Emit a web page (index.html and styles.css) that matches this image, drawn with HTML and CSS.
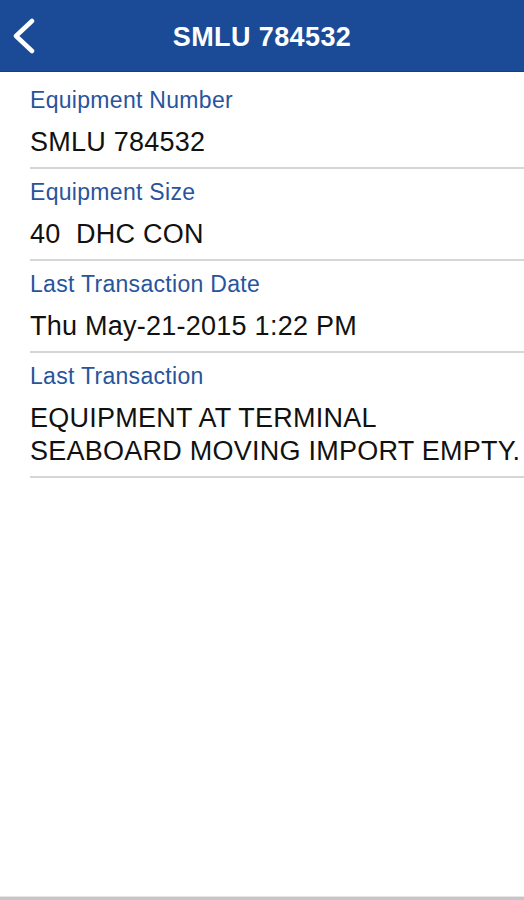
FILE: index.html
```html
<!DOCTYPE HTML>
<html>
<head>
<meta charset="utf-8">
<meta name="viewport" content="width=device-width,initial-scale=1.0">
<title>SMLU 784532</title>
<link rel="stylesheet" href="styles.css">
</head>
<body>
<div class="screen">
    <div class="navBar">
        <a class="btnBack" href="#">
            <svg width="24" height="36" viewBox="0 0 24 36"><polyline points="20,3 4,18 20,33" fill="none" stroke="#fff" stroke-width="4.5" stroke-linecap="round" stroke-linejoin="round"/></svg>
        </a>
        <div class="navTitle">SMLU 784532</div>
    </div>
    <div class="detailList">
        <div class="detailRow">
            <div class="lbl">Equipment Number</div>
            <div class="val">SMLU 784532</div>
        </div>
        <div class="detailRow">
            <div class="lbl">Equipment Size</div>
            <div class="val">40&nbsp; DHC CON</div>
        </div>
        <div class="detailRow">
            <div class="lbl">Last Transaction Date</div>
            <div class="val">Thu May-21-2015 1:22 PM</div>
        </div>
        <div class="detailRow">
            <div class="lbl">Last Transaction</div>
            <div class="val">EQUIPMENT AT TERMINAL<br>SEABOARD MOVING IMPORT EMPTY.</div>
        </div>
    </div>
    <div class="tabBar"></div>
</div>
</body>
</html>
```

FILE: styles.css
```css
html, body { margin:0; padding:0; height:100%; }
body { background:#fff; font-family:"Liberation Sans", Arial, sans-serif; color:#111; }
.screen { display:flex; flex-direction:column; height:100%; }
.navBar { position:relative; height:71px; background:#1b4b97; border-bottom:1px solid #153d80; display:flex; align-items:center; justify-content:center; }
.btnBack { position:absolute; left:12px; top:18px; display:block; width:24px; height:36px; }
.btnBack svg { display:block; }
.navTitle { color:#fff; font-weight:bold; font-size:27px; letter-spacing:0.4px; margin-top:3px; }
.detailList { flex:1; padding-top:5px; }
.detailRow { margin-left:30px; padding:10px 0 8px 0; border-bottom:2px solid #d6d6d6; }
.lbl { color:#28549c; font-size:23px; line-height:26px; letter-spacing:0.3px; }
.val { color:#111; font-size:27px; line-height:33px; letter-spacing:0.25px; margin-top:13px; }
.tabBar { height:3px; border-top:1px solid #e6e6e6; background:#c6c6c6; }
```
